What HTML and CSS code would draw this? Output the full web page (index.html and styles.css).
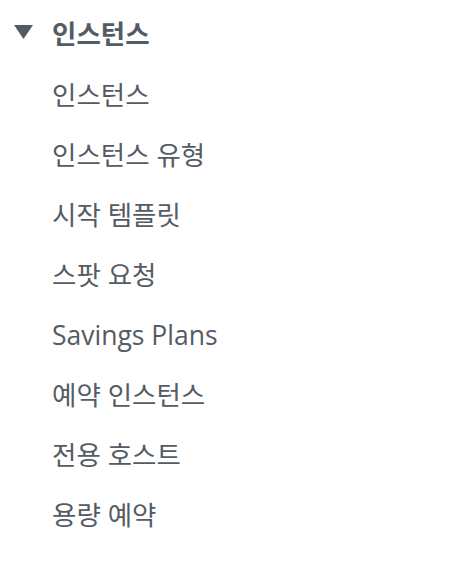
FILE: index.html
```html
<!DOCTYPE html>
<html lang="ko">
<head>
<meta charset="utf-8">
<link rel="stylesheet" href="styles.css">
</head>
<body>
<nav class="nav">
  <div class="section-head">
    <svg class="caret" width="20" height="16" viewBox="0 0 20 16"><polygon points="0,1 19,1 9.5,15" fill="#545b64"/></svg>
    <span class="head-label">인스턴스</span>
  </div>
  <ul class="items">
    <li>인스턴스</li>
    <li>인스턴스 유형</li>
    <li>시작 템플릿</li>
    <li>스팟 요청</li>
    <li>Savings Plans</li>
    <li>예약 인스턴스</li>
    <li>전용 호스트</li>
    <li>용량 예약</li>
  </ul>
</nav>
</body>
</html>
```
FILE: styles.css
```css
html, body {
  margin: 0;
  padding: 0;
  background: #ffffff;
}
body {
  font-family: "Open Sans", "Noto Sans CJK KR", sans-serif;
  color: #545b64;
}
.nav {
  padding: 12px 0 0 14px;
}
.section-head {
  display: flex;
  align-items: center;
  gap: 18px;
  height: 40px;
}
.caret {
  display: block;
}
.head-label {
  font-size: 26.5px;
  font-weight: 700;
  color: #545b64;
}
.items {
  list-style: none;
  margin: 13px 0 0 0;
  padding: 0 0 0 38px;
}
.items li {
  font-size: 26.5px;
  font-weight: 400;
  line-height: 60px;
  height: 60px;
}
```
